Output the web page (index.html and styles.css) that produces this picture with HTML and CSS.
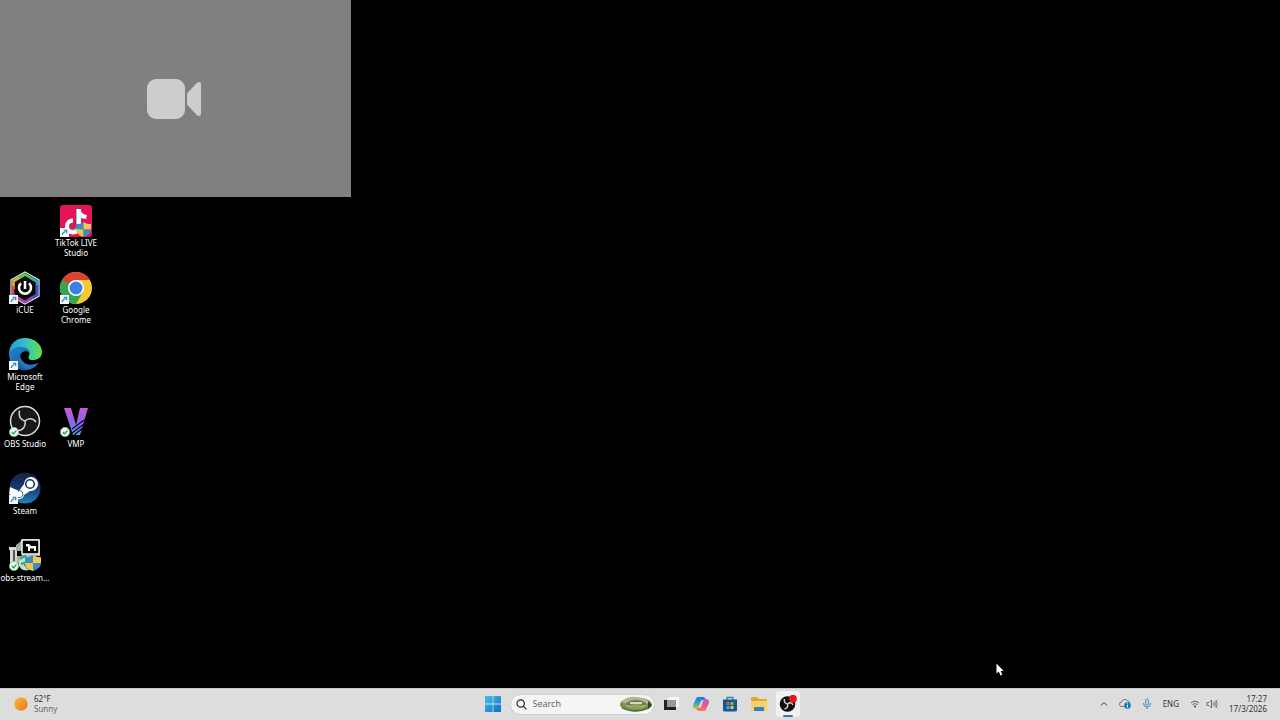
FILE: index.html
```html
<!DOCTYPE html>
<html lang="en">
<head>
<meta charset="utf-8">
<title>Desktop</title>
<link rel="stylesheet" href="styles.css">
</head>
<body>
<svg class="defs" aria-hidden="true">
  <defs>
    <symbol id="shortcut" viewBox="0 0 9 9"><path fill="#f4fafd" d="M0 0h9v9H0z"/><path d="M2.200 7Q2.300 4.500 5.500 3.400M3.700 2.300H6.700V5.200" fill="none" stroke="#2479b5" stroke-width="1.100"/></symbol>
    <symbol id="synced" viewBox="0 0 10 10"><circle cx="5" cy="5" r="4.700" fill="#e4f7e8" stroke="#68bd7c" stroke-width=".6"/><path d="M2.800 5.200l1.600 1.600 3-3.200" fill="none" stroke="#268747" stroke-width="1.200"/></symbol>
    <clipPath id="shield-clip"><path d="M8 0c2.500 1.800 5 2.200 8 2.200V8c0 4-3.500 6.500-8 8-4.500-1.500-8-4-8-8V2.200C3 2.200 5.500 1.800 8 0z"/></clipPath>
    <symbol id="shield" viewBox="0 0 16 16"><g clip-path="url(#shield-clip)"><path fill="#3b8fc0" d="M0 0h8v8H0z"/><path fill="#efcc55" d="M8 0h8v8H8z"/><path fill="#efc84b" d="M0 8h8v8H0z"/><path fill="#3b8fc0" d="M8 8h8v8H8z"/></g></symbol>
    <linearGradient id="edge-top"><stop stop-color="#1e9ed8"/><stop offset=".5" stop-color="#35c2c4"/><stop offset="1" stop-color="#65e044"/></linearGradient>
    <linearGradient id="edge-low" x2="1" y2="1"><stop stop-color="#2087d0"/><stop offset="1" stop-color="#174b91"/></linearGradient>
    <linearGradient id="vmp" x2="0" y2="1"><stop stop-color="#c45ad8"/><stop offset=".5" stop-color="#8d65e6"/><stop offset="1" stop-color="#5d9df0"/></linearGradient>
    <linearGradient id="steam" x2="0" y2="1"><stop stop-color="#17213f"/><stop offset=".5" stop-color="#153c70"/><stop offset="1" stop-color="#2482b9"/></linearGradient>
    <linearGradient id="sun" x2="1" y2="1"><stop stop-color="#f8bd36"/><stop offset="1" stop-color="#ec7321"/></linearGradient>
    <linearGradient id="win" x2="1" y2="1"><stop stop-color="#48bdee"/><stop offset="1" stop-color="#0873c5"/></linearGradient>
    <linearGradient id="cop-a" x2="0" y2="1"><stop stop-color="#2174d8"/><stop offset=".5" stop-color="#2aa9c2"/><stop offset="1" stop-color="#e6c336"/></linearGradient>
    <linearGradient id="cop-b" x2="0" y2="1"><stop stop-color="#a865df"/><stop offset=".5" stop-color="#e75893"/><stop offset="1" stop-color="#f38247"/></linearGradient>
  </defs>
</svg>

<main class="desktop">
  <div class="icons">
    <button class="shortcut tiktok">
      <svg class="art" viewBox="0 0 34 34"><rect x="1" y="1" width="32" height="32" rx="3" fill="#e51358"/><g fill="none" stroke-width="4"><path d="M19 5v17a5.500 5.500 0 1 1-5.500-5.500M19 7c.8 4 3.500 5.500 7.500 6" stroke="#55d7dc"/><path d="M20 5v17.500a6 6 0 1 1-6-6M20 7c.8 4 3.500 5.500 7.500 6" stroke="#fff"/></g><use href="#shield" x="17" y="18" width="15" height="15"/><use href="#shortcut" x="1" y="24" width="9" height="9"/></svg>
      <span>TikTok LIVE Studio</span>
    </button>
    <button class="shortcut icue">
      <svg class="art" viewBox="0 0 34 34"><path d="M17 1l14 8v16l-14 8-14-8V9z" fill="#080909" stroke="#dce1df" stroke-width="1.300"/><g fill="none" stroke-width="2.600"><path d="M5.500 18v-8L16 4" stroke="#e4b43c"/><path d="M11 6.500l6-3 11 6.500" stroke="#56c94b"/><path d="M22 6.500l7 4V20" stroke="#2baab5"/><path d="M29 14v9.500l-8 5" stroke="#3d58cc"/><path d="M25 26l-8 5-9-5" stroke="#a33fc2"/><path d="M12 28l-7-4v-9" stroke="#db4260"/></g><circle cx="17" cy="17" r="8.500" fill="#0a0a0a"/><path d="M13 12.200a6 6 0 1 0 8 0M17 10v8" fill="none" stroke="#fff" stroke-width="2.500"/><use href="#shortcut" x="1" y="24" width="9" height="9"/></svg>
      <span>iCUE</span>
    </button>
    <button class="shortcut chrome">
      <svg class="art" viewBox="0 0 34 34"><circle cx="17" cy="17" r="16" fill="#f7ca35"/><path d="M3.100 9A16 16 0 0 0 17 33l7-12-7-4-7 4z" fill="#34a653"/><path d="M3.100 9L10 21l7-4V9z" fill="#34a653"/><path d="M3.100 9A16 16 0 0 1 30.900 9H17a8 8 0 0 0-7 12z" fill="#dc4335"/><path d="M3.100 9L10 21l3-7z" fill="#34a653"/><circle cx="17" cy="17" r="8" fill="#fff"/><circle cx="17" cy="17" r="6.500" fill="#3b7fe4"/><use href="#shortcut" x="1" y="24" width="9" height="9"/></svg>
      <span>Google Chrome</span>
    </button>
    <button class="shortcut edge">
      <svg class="art" viewBox="0 0 34 34"><path d="M1 16C1 6 8 0 17 0c10 0 17 7 17 14 0 6-5 8-9 8-5 0-5-2-4-4 3-7-7-12-20-2z" fill="url(#edge-top)"/><path d="M1 16c3-9 19-10 20-1-3-4-9-1-9 5 0 6 9 9 18 5-4 6-10 8-16 7C6 31 1 24 1 16z" fill="url(#edge-low)"/><path d="M12 18c-3 6 2 13 8 13 4 0 8-2 10-6-6 3-15 3-18-7z" fill="#2674bb"/><use href="#shortcut" x="1" y="23" width="9" height="9"/></svg>
      <span>Microsoft Edge</span>
    </button>
    <button class="shortcut obs">
      <svg class="art" viewBox="0 0 34 34"><circle cx="17" cy="16" r="14.500" fill="#191819" stroke="#deddde" stroke-width="1.500"/><g fill="none" stroke="#d5d4d5" stroke-width="1.500"><path d="M17 16c-3.500-1-7-4-5.500-10.500"/><path d="M17 16c2.500-2.800 7.500-3.800 11 1"/><path d="M17 16c.8 4-.8 9-7 9.800"/></g><use href="#synced" x="1" y="22" width="10" height="10"/></svg>
      <span>OBS Studio</span>
    </button>
    <button class="shortcut vmp">
      <svg class="art" viewBox="0 0 34 34"><path d="M5 3h7l5 17 4-17h8l-8 27h-7z" fill="url(#vmp)"/><path d="M13 24l12-9M13 28l12-9M15 30l9-7" stroke="#07080f" stroke-width="1.200"/><use href="#synced" x="1" y="22" width="10" height="10"/></svg>
      <span>VMP</span>
    </button>
    <button class="shortcut steam">
      <svg class="art" viewBox="0 0 34 34"><circle cx="17" cy="16" r="15.500" fill="url(#steam)"/><path d="M2 15l9 4 5-7a7 7 0 1 1 6 7l-6 4a5 5 0 0 1-9 2l-6-3z" fill="#fff"/><circle cx="22" cy="12" r="4.300" fill="#fff" stroke="#183963" stroke-width="1.600"/><path d="M8 23a3.500 3.500 0 1 0 2-4" fill="none" stroke="#2b5b8b"/><use href="#shortcut" x="1" y="23" width="9" height="9"/></svg>
      <span>Steam</span>
    </button>
    <button class="shortcut stream">
      <svg class="art" viewBox="0 0 34 34"><path d="M2 8h10v3H9v18H2V11H1V8z" fill="#d8d8d3"/><path d="M5 11h2v15H5z" fill="#545855"/><path d="M12 3L8 6v6h6v5H9v7h17v-7h6V1l-3-1H14z" fill="#a7aaa7"/><path d="M14 1h17v14H14z" fill="#050505" stroke="#eee" stroke-width="1.500"/><path d="M18 5h3l2 2h5v5h-2V9.500h-4V12h-2V7.500h-2z" fill="#fff"/><circle cx="18" cy="24" r="7.500" fill="#c5ded1"/><path d="M12 20l5-3 3 4-3 5 4 4M13 25l10-3" stroke="#299e80" stroke-width="2" fill="none"/><use href="#shield" x="17" y="16" width="16" height="16"/><use href="#synced" x="1" y="22" width="10" height="10"/></svg>
      <span>obs-stream...</span>
    </button>
  </div>
  <section class="camera" aria-label="Camera off">
    <svg viewBox="0 0 54 40"><rect width="38" height="40" rx="9" fill="#cdcdcd"/><path d="M40 14.500L49.500 4.200Q54 1 54 6v28q0 5-4.500 1.800L40 25.500z" fill="#cdcdcd"/></svg>
  </section>
  <svg class="pointer" viewBox="0 0 8 13"><path d="M.5.500v10l2.300-2 1.700 4 1.800-.8-1.600-3.700h3z" fill="#fff"/></svg>
</main>

<footer class="taskbar">
  <button class="weather">
    <svg viewBox="0 0 14 14"><circle cx="7" cy="7" r="6.700" fill="url(#sun)"/></svg>
    <span class="lines"><span>62°F</span><span class="muted">Sunny</span></span>
  </button>
  <nav class="apps">
    <button class="app start" aria-label="Start"><svg viewBox="0 0 16 16"><path d="M0 0h7.600v7.600H0zM8.400 0H16v7.600H8.400zM0 8.400h7.600V16H0zM8.400 8.400H16V16H8.400z" fill="url(#win)"/></svg></button>
    <label class="search">
      <svg class="lens" viewBox="0 0 11 11"><circle cx="4.700" cy="4.500" r="3.700" fill="none" stroke="#262626" stroke-width="1.200"/><path d="M7.500 7.400l3 3" stroke="#262626" stroke-width="1.300"/></svg>
      <input type="text" placeholder="Search" aria-label="Search">
      <svg class="scene" viewBox="0 0 34 16"><ellipse cx="17" cy="8.500" rx="16" ry="7" fill="#769447"/><path d="M2 6Q8 0 18 1t14 6l-5 1-22-1z" fill="#a9bd8c"/><ellipse cx="17" cy="8" rx="11" ry="4.500" fill="#baa983"/><path d="M7 7Q17 1 27 7v2H7z" fill="#776f5c"/><path d="M11 6h12v2H11z" fill="#d9d5ba"/><ellipse cx="17" cy="10" rx="7" ry="2" fill="#8da45e"/><path d="M3 12q13 6 26 0" fill="none" stroke="#446e46" stroke-width="1.300"/><path d="M29 5l4 4-4 4z" fill="#2a492d"/></svg>
    </label>
    <button class="app" aria-label="Task view"><svg viewBox="0 0 16 16"><path d="M4 1h11v10H4z" fill="#f5f5f5"/><path d="M3 4h9v8H3z" fill="#999"/><path d="M0 4h3v7h9v3H0z" fill="#222"/></svg></button>
    <button class="app" aria-label="Copilot"><svg viewBox="0 0 16 16"><path d="M5 1h5q2 0 2.500 2l.5 1h-3q-2 0-2.500 2L6 11q-.5 2-3 2Q0 13 0 10q0-1 .5-2L3 2.500Q3.500 1 5 1z" fill="url(#cop-a)"/><path d="M11 15H6q-2 0-2.500-2L3 12h3q2 0 2.500-2L10 5q.5-2 3-2 3 0 3 3 0 1-.5 2L13 13.500q-.5 1.500-2 1.500z" fill="url(#cop-b)"/></svg></button>
    <button class="app" aria-label="Microsoft Store"><svg viewBox="0 0 16 16"><path d="M5 4V1.500h6V4" fill="none" stroke="#2585be" stroke-width="1.300"/><path d="M1 3.500h14V14q0 1.500-1.500 1.500h-11Q1 15.500 1 14z" fill="#17568f"/><path d="M4.500 6h3v3h-3z" fill="#e95837"/><path d="M8.500 6h3v3h-3z" fill="#86c240"/><path d="M4.500 10h3v3h-3z" fill="#36aee6"/><path d="M8.500 10h3v3h-3z" fill="#f5c63b"/></svg></button>
    <button class="app" aria-label="File Explorer"><svg viewBox="0 0 16 16"><path d="M0 2q0-1 1-1h5l2 2h7q1 0 1 1v10H0z" fill="#e7a72e"/><path d="M0 5h16v9q0 1-1 1H1q-1 0-1-1z" fill="#f8d065"/><path d="M3 11h10v4H3z" fill="#3383bc"/></svg></button>
    <button class="app active" aria-label="OBS Studio"><svg viewBox="0 0 18 18"><circle cx="8.500" cy="9" r="7.800" fill="#0d0d0d"/><g fill="none" stroke="#d9d9d9" stroke-width="1.400"><path d="M8.500 9Q4.500 8 5.500 4"/><path d="M8.500 9Q12 6 14 10"/><path d="M8.500 9q1 4-3 5"/></g><circle cx="14" cy="3.700" r="3.900" fill="#ed1717"/></svg></button>
  </nav>
  <div class="tray">
    <button aria-label="Show hidden icons"><svg class="up" viewBox="0 0 8 8"><path d="M1 5.500l3-3 3 3" fill="none" stroke="#333"/></svg></button>
    <button aria-label="Cloud storage"><svg class="cloud" viewBox="0 0 12 10"><path d="M5 7.500H3A2.200 2.200 0 0 1 2.500 3 3.500 3.500 0 0 1 9 2.500q1.500 0 2 1.500" fill="none" stroke="#777"/><circle cx="8.500" cy="6.500" r="3.300" fill="#1478b8"/><path d="M8.500 4.300v1M8.500 6v2.400" stroke="#fff"/></svg></button>
    <button aria-label="Microphone"><svg class="mic" viewBox="0 0 10 12"><rect x="3.500" y="1" width="3" height="6" rx="1.500" fill="#b7d4e7" stroke="#4384b4" stroke-width=".8"/><path d="M1.500 5q0 4 3.500 4t3.500-4M5 9v2" fill="none" stroke="#4384b4"/></svg></button>
    <button class="lang">ENG</button>
    <button class="network" aria-label="Network and sound"><svg class="wifi" viewBox="0 0 10 10"><g fill="none" stroke="#555" stroke-width=".9"><path d="M1 4q4-3.500 8 0M2.500 5.700q2.500-2.200 5 0"/></g><circle cx="5" cy="7.500" r="1" fill="#444"/></svg><svg class="sound" viewBox="0 0 12 10"><path d="M1 3.500h2L5.500 1v8L3 6.500H1zM7 3.500q1 1.500 0 3M8.500 2.300q2 2.700 0 5.400M10 1q2.500 4 0 8" fill="none" stroke="#555" stroke-width=".8"/></svg></button>
    <button class="clock"><span>17:27</span><span>17/3/2026</span></button>
  </div>
</footer>
</body>
</html>
```
FILE: styles.css
```css
* {
  box-sizing: border-box;
}

body {
  margin: 0;
  min-height: 100vh;
  display: flex;
  flex-direction: column;
  background: #000;
  font-family: "Noto Sans", "Open Sans", sans-serif;
  font-size: 8px;
  line-height: 10px;
}

button,
input {
  margin: 0;
  padding: 0;
  border: 0;
  background: none;
  color: inherit;
  font: inherit;
}

svg {
  display: block;
}

.defs {
  position: absolute;
  width: 0;
  height: 0;
}

.desktop {
  flex: 1;
  position: relative;
}

.icons {
  display: grid;
  grid-template-columns: 50px 50px;
  grid-template-rows: repeat(9, 67px);
  column-gap: 1px;
  padding-top: 2px;
}

.shortcut {
  display: flex;
  flex-direction: column;
  align-items: center;
  padding-top: 1px;
  color: #fff;
}

.art {
  width: 34px;
  height: 34px;
}

.tiktok { grid-area: 4 / 2; }
.icue { grid-area: 5 / 1; }
.chrome { grid-area: 5 / 2; }
.edge { grid-area: 6 / 1; }
.obs { grid-area: 7 / 1; }
.vmp { grid-area: 7 / 2; }
.steam { grid-area: 8 / 1; }
.stream { grid-area: 9 / 1; }

.camera {
  position: absolute;
  top: 0;
  left: 0;
  width: 351px;
  height: 197px;
  display: grid;
  place-items: center;
  padding-right: 3px;
  background: #808080;
}

.camera svg {
  width: 54px;
  height: 40px;
}

.pointer {
  position: absolute;
  left: 996px;
  top: 663px;
  width: 8px;
  height: 13px;
}

.taskbar {
  display: grid;
  grid-template-columns: 1fr auto 1fr;
  align-items: center;
  height: 32px;
  padding-bottom: 1px;
  background: #dedddd;
  border-top: 1px solid #c9c8c8;
  color: #333;
}

.weather {
  justify-self: start;
  display: flex;
  align-items: center;
  gap: 6px;
  padding-left: 14px;
  text-align: left;
}

.weather svg {
  width: 14px;
  height: 14px;
}

.lines {
  display: flex;
  flex-direction: column;
}

.muted {
  color: #666;
}

.apps {
  display: flex;
  align-items: center;
  gap: 5px;
}

.app {
  display: grid;
  place-items: center;
  position: relative;
  width: 24px;
  height: 26px;
  border-radius: 3px;
}

.app svg {
  width: 16px;
  height: 16px;
}

.app.active {
  background: #f2f1f1;
}

.app.active svg {
  width: 18px;
  height: 18px;
}

.app.active::after {
  content: "";
  position: absolute;
  bottom: 0;
  width: 10px;
  height: 2px;
  border-radius: 1px;
  background: #2878bd;
}

.search {
  display: flex;
  align-items: center;
  width: 145px;
  height: 21px;
  padding: 0 1px 0 5px;
  border: 1px solid #cfcfcf;
  border-radius: 11px;
  background: #f5f5f5;
}

.search input {
  flex: 1;
  min-width: 0;
  padding-left: 6px;
  font-size: 9px;
  line-height: 14px;
  outline: 0;
}

.search input::placeholder {
  color: #666;
  opacity: 1;
}

.lens {
  width: 11px;
  height: 11px;
}

.scene {
  width: 34px;
  height: 16px;
}

.tray {
  justify-self: end;
  display: flex;
  align-items: center;
  gap: 11px;
  padding-right: 13px;
}

.up {
  width: 8px;
  height: 8px;
}

.cloud,
.sound {
  width: 12px;
  height: 10px;
}

.mic {
  width: 10px;
  height: 12px;
}

.wifi {
  width: 10px;
  height: 10px;
}

.network {
  display: flex;
  gap: 6px;
}

.clock {
  display: flex;
  flex-direction: column;
  align-items: flex-end;
}
```
